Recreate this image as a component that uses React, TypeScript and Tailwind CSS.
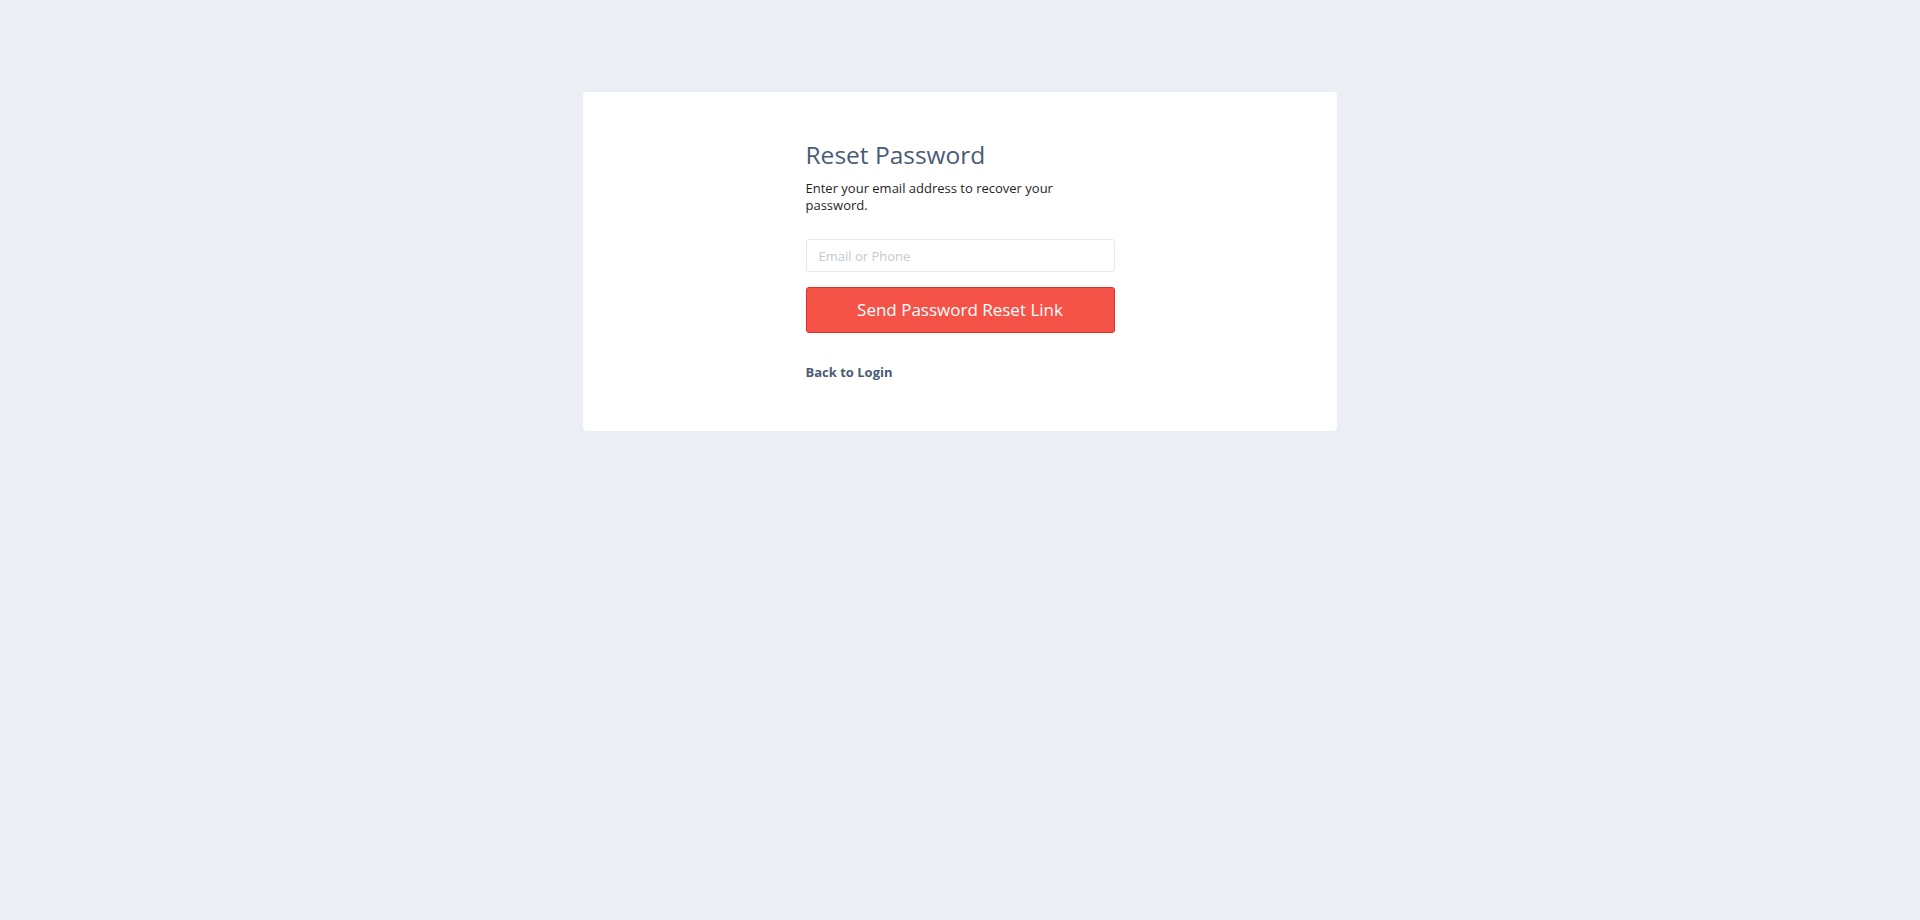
import React from "react";

export default function App() {
  return (
    <div
      className="min-h-[920px] w-full bg-[#ebeef3] pt-[92px]"
      style={{ fontFamily: '"Open Sans", "Liberation Sans", sans-serif' }}
    >
      <div className="mx-auto w-[754px] rounded-[4px] bg-white pt-[50px] pb-[50px]">
        <div className="mx-auto w-[309px]">
          <h1 className="text-[24.5px] leading-[26px] font-normal text-[#4b5b77]">
            Reset Password
          </h1>
          <p className="mt-[12px] w-[270px] text-[13px] leading-[17px] text-[#1f1f1f]">
            Enter your email address to recover your password.
          </p>
          <input
            type="text"
            placeholder="Email or Phone"
            className="mt-[25px] block h-[33px] w-full rounded-[3px] border border-[#e6e8eb] bg-white px-[12px] text-[13px] text-[#333] outline-none placeholder:text-[#c5cad1]"
          />
          <button
            type="button"
            className="mt-[15px] flex h-[46px] w-full items-center justify-center rounded-[3px] border border-[#e0302a] bg-[#f55347] text-[17px] text-white"
          >
            Send Password Reset Link
          </button>
          <div className="mt-[29px] leading-[18px]">
            <a
              href="#"
              className="text-[13px] leading-[18px] font-bold text-[#4b5b77]"
            >
              Back to Login
            </a>
          </div>
        </div>
      </div>
    </div>
  );
}
